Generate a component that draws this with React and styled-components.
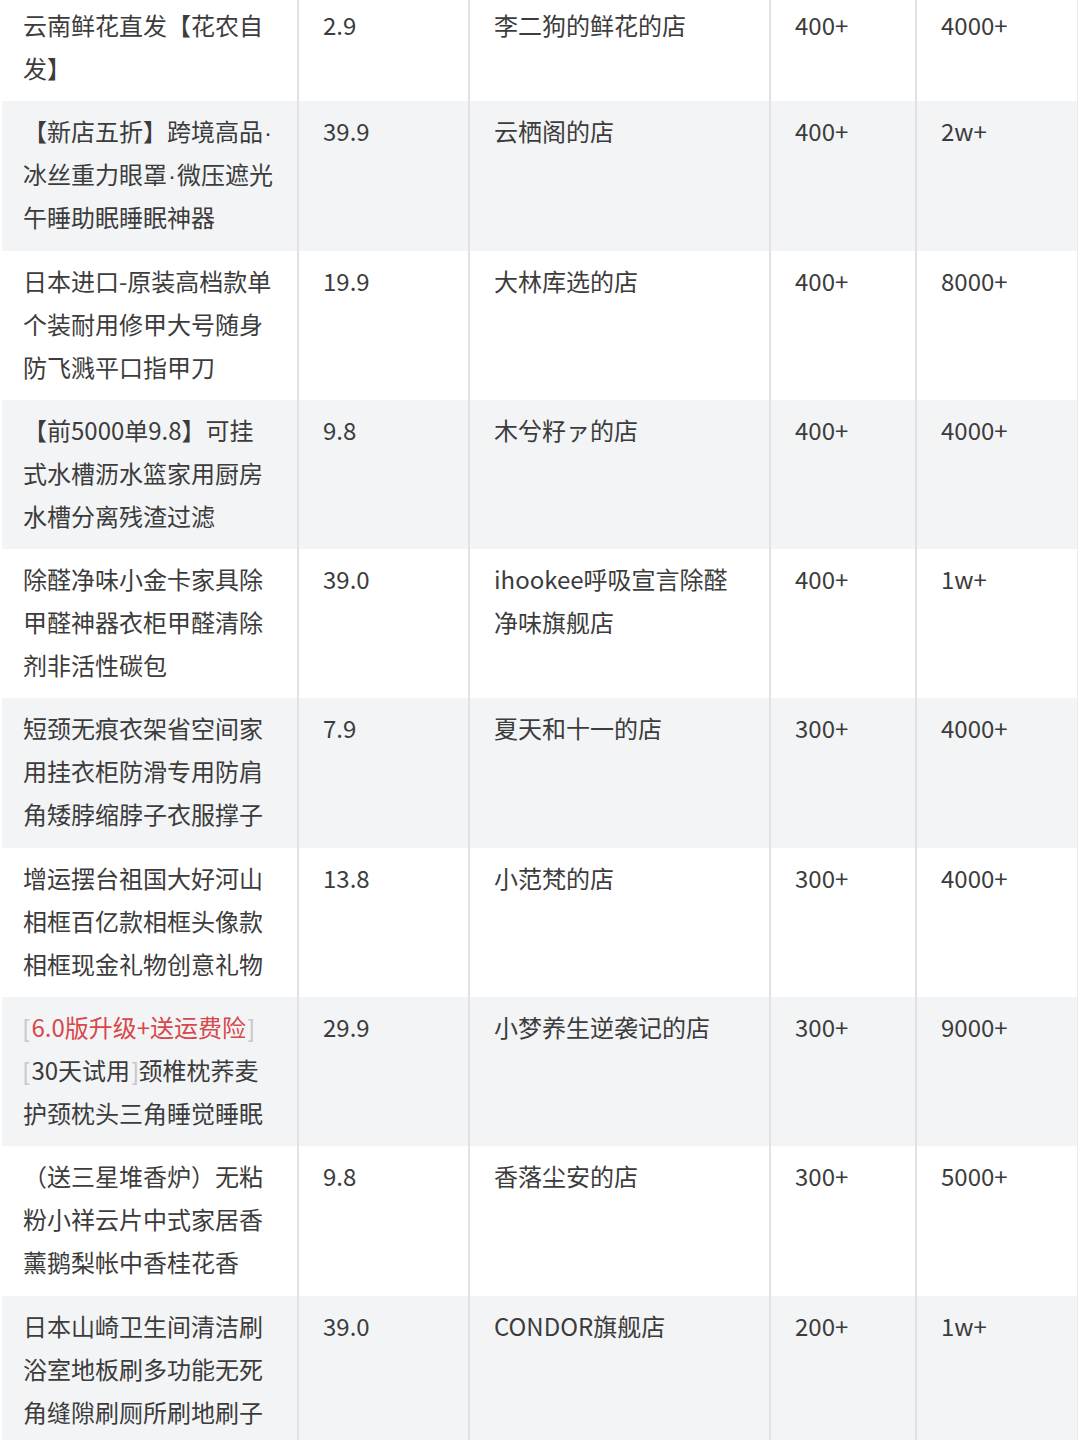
import React from "react"
import styled, { createGlobalStyle } from "styled-components"

const GlobalStyle = createGlobalStyle`
  html, body {
    margin: 0;
    padding: 0;
    background: #ffffff;
  }
  body {
    font-family: "Noto Sans CJK SC", "Noto Sans", sans-serif;
    overflow: hidden;
  }
`

const Page = styled.main`
  width: 1080px;
  height: 1440px;
  overflow: hidden;
  background: #ffffff;
`

const Table = styled.table`
  margin: -5px 0 0 2px;
  width: 1075px;
  table-layout: fixed;
  border-collapse: collapse;
  border-spacing: 0;
  color: #3c3c3c;
  font-size: 24px;
  line-height: 43px;
`

const Row = styled.tr`
  background: ${(p) => (p.$striped ? "#f3f4f6" : "#ffffff")};
`

const Cell = styled.td`
  vertical-align: top;
  padding: 8px 10px 12.3px 24px;
  white-space: nowrap;
  overflow: hidden;
  border-left: 2px solid #e2e2e4;

  &:first-child {
    padding-left: 21px;
    border-left: none;
  }
  &:last-child {
    border-right: 1px solid #ececee;
  }
`

const Line = styled.span`
  display: block;
  height: 43px;
  overflow: hidden;
`

const Dot = styled.span`
  font-family: "Liberation Sans", sans-serif;
  margin: 0 1px;
`

const Tag = styled.span`
  color: ${(p) => (p.$hot ? "#d8484b" : "#3c3c3c")};

  &::before,
  &::after {
    font-family: "Liberation Sans", sans-serif;
    font-weight: 300;
    color: #c9c9cc;
    font-size: 23px;
    line-height: 1;
  }
  &::before {
    content: "[";
    margin-right: 2px;
  }
  &::after {
    content: "]";
    margin-left: 2px;
  }
`

const rows = [
  { name: ["云南鲜花直发【花农自", "发】"], price: "2.9", shop: ["李二狗的鲜花的店"], a: "400+", b: "4000+" },
  {
    name: [
      <>【新店五折】跨境高品<Dot>·</Dot></>,
      <>冰丝重力眼罩<Dot>·</Dot>微压遮光</>,
      "午睡助眠睡眠神器",
    ],
    price: "39.9",
    shop: ["云栖阁的店"],
    a: "400+",
    b: "2w+",
  },
  { name: ["日本进口-原装高档款单", "个装耐用修甲大号随身", "防飞溅平口指甲刀"], price: "19.9", shop: ["大林库选的店"], a: "400+", b: "8000+" },
  { name: ["【前5000单9.8】可挂", "式水槽沥水篮家用厨房", "水槽分离残渣过滤"], price: "9.8", shop: ["木兮籽ァ的店"], a: "400+", b: "4000+" },
  { name: ["除醛净味小金卡家具除", "甲醛神器衣柜甲醛清除", "剂非活性碳包"], price: "39.0", shop: ["ihookee呼吸宣言除醛", "净味旗舰店"], a: "400+", b: "1w+" },
  { name: ["短颈无痕衣架省空间家", "用挂衣柜防滑专用防肩", "角矮脖缩脖子衣服撑子"], price: "7.9", shop: ["夏天和十一的店"], a: "300+", b: "4000+" },
  { name: ["增运摆台祖国大好河山", "相框百亿款相框头像款", "相框现金礼物创意礼物"], price: "13.8", shop: ["小范梵的店"], a: "300+", b: "4000+" },
  {
    name: [
      <Tag $hot>6.0版升级+送运费险</Tag>,
      <>
        <Tag>30天试用</Tag>颈椎枕荞麦
      </>,
      "护颈枕头三角睡觉睡眠",
    ],
    price: "29.9",
    shop: ["小梦养生逆袭记的店"],
    a: "300+",
    b: "9000+",
  },
  { name: ["（送三星堆香炉）无粘", "粉小祥云片中式家居香", "薰鹅梨帐中香桂花香"], price: "9.8", shop: ["香落尘安的店"], a: "300+", b: "5000+" },
  { name: ["日本山崎卫生间清洁刷", "浴室地板刷多功能无死", "角缝隙刷厕所刷地刷子"], price: "39.0", shop: ["CONDOR旗舰店"], a: "200+", b: "1w+" },
]

const Lines = ({ items }) => items.map((item, i) => <Line key={i}>{item}</Line>)

const App = () => {
  return (
    <Page>
      <GlobalStyle />
      <Table>
        <colgroup>
          <col style={{ width: 296 }} />
          <col style={{ width: 171 }} />
          <col style={{ width: 301 }} />
          <col style={{ width: 146 }} />
          <col style={{ width: 161 }} />
        </colgroup>
        <tbody>
          {rows.map((r, i) => (
            <Row key={i} $striped={i % 2 === 1}>
              <Cell>
                <Lines items={r.name} />
              </Cell>
              <Cell>{r.price}</Cell>
              <Cell>
                <Lines items={r.shop} />
              </Cell>
              <Cell>{r.a}</Cell>
              <Cell>{r.b}</Cell>
            </Row>
          ))}
        </tbody>
      </Table>
    </Page>
  )
}

export default App
